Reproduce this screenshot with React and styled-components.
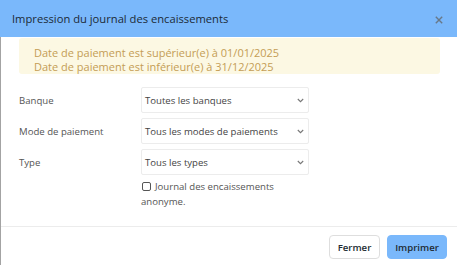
import React from "react";
import styled, { createGlobalStyle } from "styled-components";

const Global = createGlobalStyle`
  html, body { margin: 0; padding: 0; background: #fff; }
  body { font-family: "Open Sans", "Noto Sans", sans-serif; }
  * { box-sizing: border-box; }
`;

const Modal = styled.div`
  width: 457px;
  height: 265px;
  display: flex;
  flex-direction: column;
  background: #fff;
  overflow: hidden;
`;

const Header = styled.div`
  height: 37px;
  flex: 0 0 37px;
  background: #7ab8fb;
  display: flex;
  align-items: center;
  justify-content: space-between;
  padding: 0 13px 0 12px;
`;

const Title = styled.h1`
  margin: 0;
  font-size: 11.2px;
  font-weight: 400;
  color: #1c2a36;
`;

const Close = styled.button`
  border: 0;
  background: none;
  padding: 0;
  width: 10px;
  height: 10px;
  display: flex;
  align-items: center;
  justify-content: center;
  color: #687888;
  margin-top: 2px;
`;

const Frame = styled.div`
  flex: 1;
  display: flex;
  flex-direction: column;
  border-left: 1px solid #a3a3a3;
`;

const Body = styled.div`
  flex: 1;
  padding: 1px 17px 0 18px;
  border-bottom: 1px solid #ececec;
`;

const Alert = styled.div`
  background: #fcf8e3;
  border-radius: 3px;
  padding: 8px 15px 0;
  color: #c49d55;
  font-size: 11px;
  line-height: 14px;
`;

const Form = styled.div`
  margin-top: 13px;
  display: flex;
  flex-direction: column;
  gap: 5px;
`;

const Row = styled.div`
  display: grid;
  grid-template-columns: 122px 168px;
  align-items: center;
`;

const Label = styled.span`
  font-size: 9.6px;
  color: #555;
`;

const SelectBox = styled.div`
  height: 26px;
  border: 1px solid #ececec;
  border-radius: 2px;
  display: flex;
  align-items: center;
  justify-content: space-between;
  padding: 0 4px 0 3px;
  font-size: 9.6px;
  color: #444;
`;

const Check = styled.label`
  grid-column: 2;
  font-size: 9.6px;
  line-height: 15px;
  color: #555;
  margin-top: -1px;
  display: block;
`;

const Box = styled.span`
  display: inline-block;
  width: 9px;
  height: 9px;
  border: 1px solid #555;
  border-radius: 2px;
  margin: 0 4px 0 1px;
  vertical-align: -1px;
`;

const Footer = styled.div`
  flex: 0 0 38px;
  display: flex;
  justify-content: flex-end;
  align-items: flex-start;
  gap: 7px;
  padding: 8px 10px 0 0;
`;

const Button = styled.button`
  height: 24px;
  width: ${(p) => (p.$primary ? "60px" : "51px")};
  padding: 0;
  border-radius: 4px;
  border: 1px solid ${(p) => (p.$primary ? "#7ab8fb" : "#dedede")};
  background: ${(p) => (p.$primary ? "#7ab8fb" : "#fff")};
  color: #222b33;
  font-family: "Open Sans", "Noto Sans", sans-serif;
  font-size: 9.6px;
  font-weight: 600;
`;

const Chevron = () => (
  <svg width="7" height="5" viewBox="0 0 7 5">
    <path d="M0.8 1 L3.5 3.7 L6.2 1" fill="none" stroke="#777" strokeWidth="1.1" />
  </svg>
);

const rows = [
  ["Banque", "Toutes les banques"],
  ["Mode de paiement", "Tous les modes de paiements"],
  ["Type", "Tous les types"],
];

export default function App() {
  return (
    <>
      <Global />
      <Modal>
        <Header>
          <Title>Impression du journal des encaissements</Title>
          <Close aria-label="Fermer">
            <svg width="8" height="8" viewBox="0 0 8 8">
              <path d="M0.8 0.8 L7.2 7.2 M7.2 0.8 L0.8 7.2" stroke="currentColor" strokeWidth="1.4" />
            </svg>
          </Close>
        </Header>
        <Frame>
          <Body>
            <Alert>
              <div>Date de paiement est supérieur(e) à 01/01/2025</div>
              <div>Date de paiement est inférieur(e) à 31/12/2025</div>
            </Alert>
            <Form>
              {rows.map(([l, v]) => (
                <Row key={l}>
                  <Label>{l}</Label>
                  <SelectBox>
                    <span>{v}</span>
                    <Chevron />
                  </SelectBox>
                </Row>
              ))}
              <Row>
                <Check>
                  <Box />
                  Journal des encaissements anonyme.
                </Check>
              </Row>
            </Form>
          </Body>
          <Footer>
            <Button>Fermer</Button>
            <Button $primary>Imprimer</Button>
          </Footer>
        </Frame>
      </Modal>
    </>
  );
}
